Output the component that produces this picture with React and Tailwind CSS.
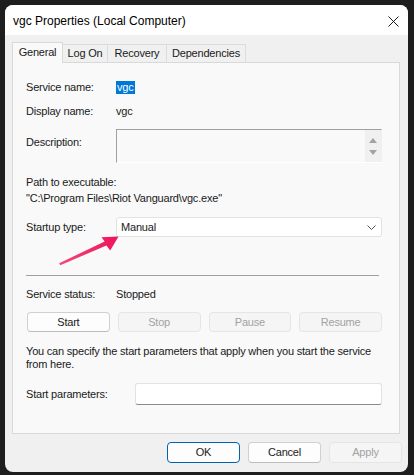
import React from 'react';

const tabs = [
  { label: 'General', w: 'w-[51px]', active: true },
  { label: 'Log On', w: 'w-[45px]' },
  { label: 'Recovery', w: 'w-[59px]' },
  { label: 'Dependencies', w: 'w-[79px]' },
];

function Tab({ label, w, active }) {
  if (active) {
    return (
      <div className={`${w} h-[21px] -mb-px relative z-10 flex items-center justify-center border border-b-0 border-[#d9d9d9] bg-[#f9f9f9] text-[#1a1a1a] pb-[2px]`}>
        {label}
      </div>
    );
  }
  return (
    <div className={`${w} h-[18px] flex items-center justify-center border border-l-0 border-b-0 border-[#dcdcdc] bg-[#f0f0f0] text-[#1a1a1a]`}>
      {label}
    </div>
  );
}

function SvcButton({ children, enabled }) {
  return (
    <div
      className={
        enabled
          ? 'h-[20px] flex items-center justify-center rounded-[4px] border border-[#d0d0d0] border-b-[#bcbcbc] bg-[#fdfdfd] text-[#1a1a1a]'
          : 'h-[20px] flex items-center justify-center rounded-[4px] border border-[#e5e5e5] bg-[#f5f5f5] text-[#a2a2a2]'
      }
    >
      {children}
    </div>
  );
}

function Row({ label, className = '', children }) {
  return (
    <div className={`flex items-center ${className}`}>
      <div className="w-[90px] shrink-0">{label}</div>
      {children}
    </div>
  );
}

export default function App() {
  return (
    <div className="relative w-[414px] h-[475px] bg-[#1e1e1e] pt-[5px] pl-[5px] font-['Liberation_Sans',Arial,sans-serif] text-[11px] tracking-[-0.2px] text-[#1a1a1a] overflow-hidden">
      <div className="w-[403px] h-[467px] rounded-[8px] bg-[#f0f0f0] overflow-hidden flex flex-col">
        {/* Title bar */}
        <div className="h-[30px] bg-white flex items-center justify-between pl-[8px] pr-[9px]">
          <span className="text-[12px] tracking-normal text-black pt-[1px]">vgc Properties (Local Computer)</span>
          <svg width="11" height="11" viewBox="0 0 11 11" className="mt-[2px]">
            <path d="M0.5 0.5 L10.5 10.5 M10.5 0.5 L0.5 10.5" stroke="#1a1a1a" strokeWidth="1" />
          </svg>
        </div>

        {/* Tabs */}
        <div className="mt-[7px] ml-[7px] flex items-end h-[20px]">
          {tabs.map((t) => (
            <Tab key={t.label} {...t} />
          ))}
        </div>

        {/* Panel */}
        <div className="ml-[7px] w-[388px] h-[372px] border border-[#d9d9d9] bg-[#f9f9f9] pl-[13px] flex flex-col">
          <Row label="Service name:" className="mt-[16px] h-[16px]">
            <span className="h-[13px] leading-[13px] bg-[#0078d7] text-white px-[1px]">vgc</span>
          </Row>
          <Row label="Display name:" className="mt-[8px] h-[16px]">
            <span>vgc</span>
          </Row>

          <div className="mt-[10px] h-[34px] flex">
            <div className="w-[90px] shrink-0 pt-[5px]">Description:</div>
            <div className="w-[266px] h-[34px] flex border border-[#a0a0a0] border-r-[#f0f0f0] border-b-[#ffffff] bg-[#f9f9f9]">
              <div className="flex-1" />
              <div className="w-[16px] bg-[#f0f0f0] flex flex-col items-center justify-center gap-[7px]">
                <svg width="8" height="5" viewBox="0 0 8 5"><path d="M0 5 L4 0 L8 5 Z" fill="#a3a3a3" /></svg>
                <svg width="8" height="5" viewBox="0 0 8 5"><path d="M0 0 L4 5 L8 0 Z" fill="#a3a3a3" /></svg>
              </div>
            </div>
          </div>

          <div className="mt-[11px] h-[16px] flex items-center">Path to executable:</div>
          <div className="h-[16px] flex items-center">"C:\Program Files\Riot Vanguard\vgc.exe"</div>

          <Row label="Startup type:" className="mt-[11px] h-[20px]">
            <div className="w-[266px] h-[20px] rounded-[3px] border border-[#e2e2e2] bg-white flex items-center justify-between pl-[4px] pr-[5px]">
              <span>Manual</span>
              <svg width="9" height="5" viewBox="0 0 9 5"><path d="M0.5 0.5 L4.5 4.5 L8.5 0.5" fill="none" stroke="#555" strokeWidth="1" /></svg>
            </div>
          </Row>

          <div className="mt-[38px] h-px w-[353px] bg-[#a0a0a0]" />

          <Row label="Service status:" className="mt-[10px] h-[16px]">
            <span>Stopped</span>
          </Row>

          <div className="mt-[10px] ml-[1px] w-[355px] grid grid-cols-4 gap-[8px]">
            <SvcButton enabled>Start</SvcButton>
            <SvcButton>Stop</SvcButton>
            <SvcButton>Pause</SvcButton>
            <SvcButton>Resume</SvcButton>
          </div>

          <p className="mt-[13px] leading-[13px]">
            You can specify the start parameters that apply when you start the service
            <br />
            from here.
          </p>

          <div className="mt-[12px] h-[22px] flex items-center">
            <div className="w-[109px] shrink-0">Start parameters:</div>
            <div className="w-[247px] h-[22px] rounded-[3px] border border-[#e2e2e2] border-b-[#8a8a8a] bg-white" />
          </div>
        </div>

        {/* Dialog buttons */}
        <div className="mt-[8px] flex justify-end gap-[8px] pr-[6px]">
          <div className="w-[73px] h-[21px] rounded-[4px] border-[1.5px] border-[#0063b1] bg-[#fdfdfd] flex items-center justify-center">OK</div>
          <div className="w-[73px] h-[21px] rounded-[4px] border border-[#d0d0d0] border-b-[#bcbcbc] bg-[#fdfdfd] flex items-center justify-center">Cancel</div>
          <div className="w-[73px] h-[21px] rounded-[4px] border border-[#e5e5e5] bg-[#f5f5f5] text-[#a2a2a2] flex items-center justify-center">Apply</div>
        </div>
      </div>

      {/* Annotation arrow */}
      <svg className="absolute left-0 top-0 pointer-events-none" width="414" height="475" viewBox="0 0 414 475">
        <defs>
          <linearGradient id="arw" x1="60" y1="264" x2="118" y2="236" gradientUnits="userSpaceOnUse">
            <stop offset="0" stopColor="#f4457a" />
            <stop offset="1" stopColor="#ee1459" />
          </linearGradient>
        </defs>
        <path
          d="M118.5 236.5 L101.5 237.3 L104.6 241.6 L59.2 263.2 L60.2 265.2 L106.4 245.4 L110.2 250.4 Z"
          fill="url(#arw)"
        />
      </svg>
    </div>
  );
}
